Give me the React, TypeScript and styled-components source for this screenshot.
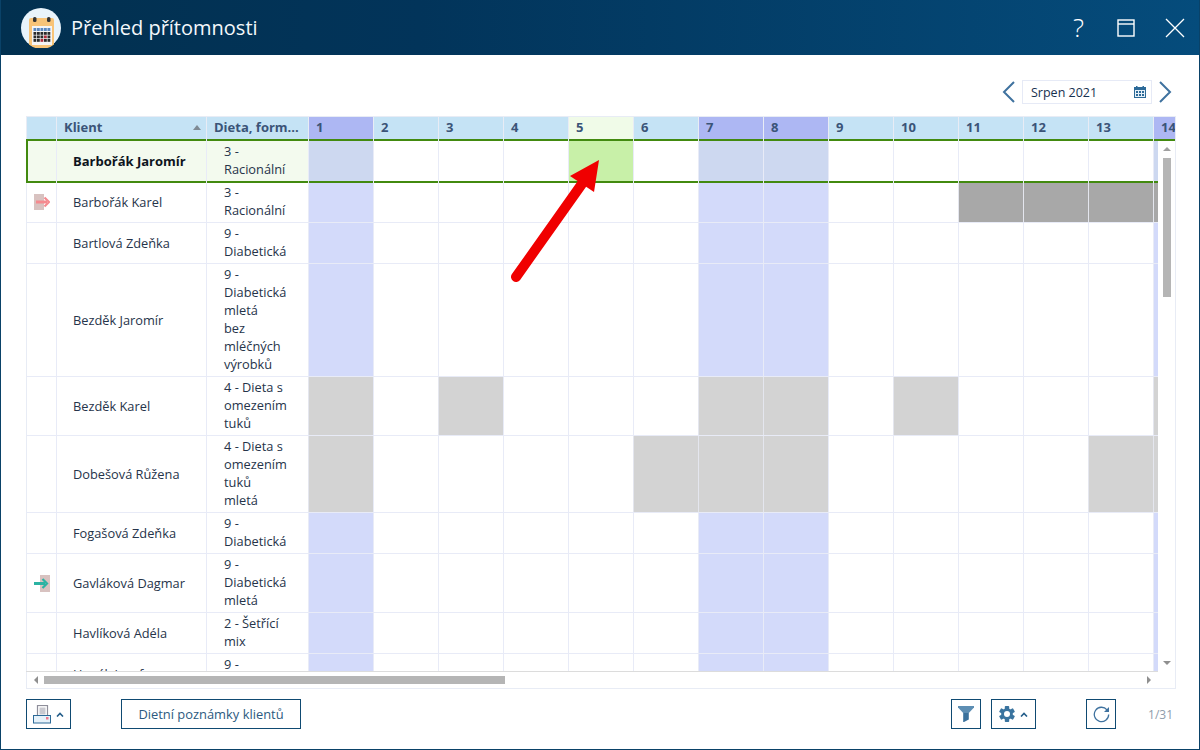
import React from "react";
import styled, { createGlobalStyle, css } from "styled-components";

const Global = createGlobalStyle`
  html, body { margin: 0; padding: 0; background: #fff; }
  body { font-family: "Open Sans", "Noto Sans", sans-serif; }
  * { box-sizing: border-box; }
`;

const GREEN = "#428a0f";
const selLines = css`
  background-image: linear-gradient(${GREEN}, ${GREEN}), linear-gradient(${GREEN}, ${GREEN});
  background-size: 100% 2px, 100% 2px;
  background-position: left top, left bottom;
  background-repeat: no-repeat;
  background-clip: padding-box;
  background-origin: padding-box;
`;

const Win = styled.div`
  position: relative; width: 1200px; height: 750px; background: #fff; overflow: hidden;
  border: 1px solid #0a4268; border-top: 0;
  display: flex; flex-direction: column;
`;
const TitleBar = styled.header`
  height: 55px; margin: 0 -1px; flex: none; display: flex; align-items: center;
  padding: 0 15px 0 21px;
  background: linear-gradient(90deg, #02304f 0%, #02345a 35%, #054c7c 100%);
  color: #fff;
`;
const TitleText = styled.div`
  font-size: 20px; margin-left: 10px; flex: 1; line-height: 55px; color: #f4f8fb;
`;
const TitleIcons = styled.div`display: flex; align-items: center; gap: 30px;`;
const Question = styled.span`font-size: 26px; font-weight: 300; line-height: 1; width: 15px; text-align: center; margin-right: 1px; margin-top: -2px;`;
const Body = styled.main`
  flex: 1; padding: 25px 25px 20px; display: flex; flex-direction: column; min-height: 0;
`;
const DateRow = styled.div`
  height: 24px; display: flex; justify-content: flex-end; align-items: center; gap: 7px; padding-right: 2px; margin-bottom: 12px;
`;
const DateBox = styled.div`
  width: 130px; height: 24px; border: 1px solid #e6eaf6; padding: 0 5px 0 8px;
  display: flex; justify-content: space-between; align-items: center;
  font-size: 12.5px; color: #17314f;
`;
const Grid = styled.section`
  position: relative; height: 573px; width: 1150px; border-right: 1px solid #e8ecf5; border-bottom: 1px solid #e8ecf5;
  display: flex; flex-direction: column; overflow: hidden;
`;
const HeadRow = styled.div`
  display: flex; height: 23px; flex: none; background: #c5e3f5; border-top: 1px solid #e8ecf5;
  position: relative; z-index: 4;
`;
const Head = styled.div<{ $w: number; $bg?: string; $pad?: number }>`
  width: ${p => p.$w}px; flex: none; background: ${p => p.$bg || "transparent"};
  font-size: 13px; font-weight: 700; color: #3b5478; line-height: 21px;
  padding-left: ${p => p.$pad ?? 7}px; border-left: 1px solid #e8ecf5; position: relative;
  white-space: nowrap; overflow: hidden;
`;
const SortMark = styled.i`
  position: absolute; right: 5px; top: 8px; width: 0; height: 0;
  border-left: 4.5px solid transparent; border-right: 4.5px solid transparent; border-bottom: 5px solid #7f8a94;
`;
const Viewport = styled.div`
  position: relative; height: 533px; flex: none; overflow: hidden; border-bottom: 1px solid #dcdcdc; width: 1132px;
`;
const Row = styled.div<{ $h: number; $sel?: boolean }>`
  display: flex; height: ${p => p.$h}px; border-bottom: 1px solid #e8ebf7; position: relative;
  ${p => p.$sel ? "border-bottom: 0; margin-bottom: -1px; z-index: 1;" : ""}
`;
const IconCell = styled.div<{ $sel?: boolean }>`
  width: 30px; flex: none; display: flex; align-items: center; justify-content: center;
  border-left: ${p => p.$sel ? `2px solid ${GREEN}` : "1px solid #e8ecf5"};
  ${p => p.$sel && css`background-color: #f3faee; ${selLines}`}
`;
const NameCell = styled.div<{ $sel?: boolean }>`
  width: 150px; flex: none; border-left: 1px solid #e8ebf7; padding-left: 16px;
  display: flex; align-items: center; font-size: ${p => p.$sel ? 13 : 12.8}px; color: ${p => p.$sel ? "#0d1420" : "#26344a"};
  font-weight: ${p => p.$sel ? 700 : 400}; white-space: nowrap;
  ${p => p.$sel && css`background-color: #f3faee; ${selLines}`}
`;
const DietCell = styled.div<{ $sel?: boolean }>`
  width: 102px; flex: none; border-left: 1px solid #e8ebf7; padding: 0 0 2px 17px;
  display: flex; align-items: center; font-size: 12.8px; line-height: 18px; color: #26344a;
  white-space: pre-line;
  ${p => p.$sel && css`background-color: #f3faee; ${selLines}`}
`;
const Day = styled.div<{ $c: string; $sel?: boolean }>`
  width: 65px; flex: none; border-left: 1px solid #e8ebf7;
  background-color: ${p => ({
    n: "#fff", w: "#d3dafa", g: "#d3d3d3", d: "#a8a8a8", s: "#cdd8f0", h: "#c8f0a8",
  } as Record<string, string>)[p.$c]};
  ${p => p.$c === "g" || p.$c === "d" ? "border-left-color: #e4e6ee;" : ""}
  ${p => p.$sel && selLines}
`;
const VBar = styled.div`
  position: absolute; right: 0; top: 23px; width: 17px; height: 533px; background: #fff; z-index: 3; border-top: 2px solid ${GREEN};
`;
const VThumb = styled.div`
  position: absolute; left: 5px; top: 17px; width: 8px; height: 139px; background: #b5b5b5;
`;
const Arrow = styled.i<{ $d: "up" | "down" | "left" | "right" }>`
  position: absolute; width: 0; height: 0;
  ${p => p.$d === "up" ? "left:5px;top:6px;border-left:4px solid transparent;border-right:4px solid transparent;border-bottom:4px solid #a0a0a0;" : ""}
  ${p => p.$d === "down" ? "left:5px;bottom:7px;border-left:4px solid transparent;border-right:4px solid transparent;border-top:4px solid #8f8f8f;" : ""}
  ${p => p.$d === "left" ? "left:7px;top:4px;border-top:4px solid transparent;border-bottom:4px solid transparent;border-right:4px solid #8f8f8f;" : ""}
  ${p => p.$d === "right" ? "right:24px;top:4px;border-top:4px solid transparent;border-bottom:4px solid transparent;border-left:4px solid #8f8f8f;" : ""}
`;
const HBar = styled.div`position: relative; height: 16px; flex: none; border-left: 1px solid #e8ecf5;`;
const HThumb = styled.div`position: absolute; left: 17px; top: 4px; width: 461px; height: 8px; background: #b5b5b5;`;
const Footer = styled.footer`
  display: flex; align-items: center; margin-top: 10px; height: 30px; width: 1150px;
`;
const Btn = styled.button<{ $w: number; $ml?: number }>`
  width: ${p => p.$w}px; height: 30px; margin-left: ${p => p.$ml ?? 0}px; padding: 0; background: #fff; flex: none;
  border: 1px solid #0f4a72; display: flex; align-items: center; justify-content: center; gap: 5px;
  font-family: inherit; font-size: 12.9px; color: #2c5a80;
`;
const Counter = styled.div`margin-left: auto; font-size: 12px; color: #8e9cab; padding-right: 3px;`;
const Overlay = styled.svg`position: absolute; left: -1px; top: 0; pointer-events: none; z-index: 5;`;

const Logo = () => (
  <svg width="40" height="40" viewBox="0 0 40 40">
    <circle cx="20" cy="20" r="20" fill="#e9f4fb" />
    <path d="M10 10h21a2 2 0 0 1 2 2V36.500a20 20 0 0 1-25 0V12a2 2 0 0 1 2-2z" fill="#f8c478" />
    <rect x="12" y="9" width="3.500" height="5" rx="1.500" fill="#333" />
    <rect x="26" y="9" width="3.500" height="5" rx="1.500" fill="#333" />
    <rect x="11" y="18" width="20" height="19" fill="#f5f5f5" />
    {[0, 1, 2, 3, 4].map(c => <rect key={c} x={12.500 + c * 3.500} y="20" width="2.800" height="3" fill="#5b88c0" />)}
    {[0, 1, 2].map(r => [0, 1, 2, 3, 4].map(c => (
      <rect key={r + "-" + c} x={12.500 + c * 3.500} y={24 + r * 3.500} width="2.800" height="2.800"
        fill={(r === 1 && c === 3) || (r === 2 && c === 2) ? "#b02a3a" : "#2a2a2a"} />
    )))}
  </svg>
);

const OutIcon = () => (
  <svg width="16" height="16" viewBox="0 0 16 16">
    <rect x="0" y="0" width="10" height="16" fill="#d8c2c0" />
    <path d="M2 8h11" stroke="#f58a8f" strokeWidth="3" />
    <path d="M10.500 3.500 15 8l-4.500 4.500" stroke="#f58a8f" strokeWidth="2.200" fill="none" />
  </svg>
);
const InIcon = () => (
  <svg width="16" height="17" viewBox="0 0 16 17">
    <rect x="6" y="0" width="10" height="17" fill="#d8c2c0" />
    <path d="M0 8.500h11" stroke="#2bb3a3" strokeWidth="3" />
    <path d="M8.500 4 13 8.500 8.500 13" stroke="#2bb3a3" strokeWidth="2.200" fill="none" />
  </svg>
);

type R = { name: string; diet: string; h: number; days?: Record<number, string>; icon?: "out" | "in"; sel?: boolean };
const rows: R[] = [
  { name: "Barbořák Jaromír", diet: "3 -\nRacionální", h: 44, sel: true, days: { 5: "h" } },
  { name: "Barbořák Karel", diet: "3 -\nRacionální", h: 41, icon: "out", days: { 11: "d", 12: "d", 13: "d", 14: "d" } },
  { name: "Bartlová Zdeňka", diet: "9 -\nDiabetická", h: 41 },
  { name: "Bezděk Jaromír", diet: "9 -\nDiabetická\nmletá\nbez\nmléčných\nvýrobků", h: 113 },
  { name: "Bezděk Karel", diet: "4 - Dieta s\nomezením\ntuků", h: 59, days: { 1: "g", 3: "g", 7: "g", 8: "g", 10: "g", 14: "g" } },
  { name: "Dobešová Růžena", diet: "4 - Dieta s\nomezením\ntuků\nmletá", h: 77, days: { 1: "g", 6: "g", 7: "g", 8: "g", 13: "g", 14: "g" } },
  { name: "Fogašová Zdeňka", diet: "9 -\nDiabetická", h: 41 },
  { name: "Gavláková Dagmar", diet: "9 -\nDiabetická\nmletá", h: 59, icon: "in" },
  { name: "Havlíková Adéla", diet: "2 - Šetřící\nmix", h: 41 },
  { name: "Hanák Josef", diet: "9 -\nDiabetická", h: 41 },
];
const weekend = [1, 7, 8, 14];
const days = Array.from({ length: 14 }, (_, i) => i + 1);

export default function App() {
  return (
    <>
      <Global />
      <Win>
        <TitleBar>
          <Logo />
          <TitleText>Přehled přítomnosti</TitleText>
          <TitleIcons>
            <Question>?</Question>
            <svg width="18" height="18" viewBox="0 0 18 18" fill="none" stroke="#fff" strokeWidth="1.400">
              <rect x="1" y="1" width="16" height="16" />
              <path d="M1 5h16" />
            </svg>
            <svg width="20" height="20" viewBox="0 0 20 20" fill="none" stroke="#fff" strokeWidth="1.300">
              <path d="M1 1l18 18M19 1 1 19" />
            </svg>
          </TitleIcons>
        </TitleBar>
        <Body>
          <DateRow>
            <svg width="13" height="22" viewBox="0 0 13 22" fill="none" stroke="#3f729f" strokeWidth="2"><path d="M12 1 2 11l10 10" /></svg>
            <DateBox>
              Srpen 2021
              <svg width="12" height="12" viewBox="0 0 12 12">
                <path d="M0 1h12v11H0z" fill="#2c6a98" />
                <rect x="1" y="4" width="10" height="7" fill="#e6f0f8" />
                {[0, 1, 2].map(r => [0, 1].map(c => <rect key={r + "" + c} x={2 + r * 3} y={5 + c * 3} width="2" height="2" fill="#2c6a98" />))}
                <rect x="2" y="0" width="1.500" height="2" fill="#2c6a98" />
                <rect x="8.500" y="0" width="1.500" height="2" fill="#2c6a98" />
              </svg>
            </DateBox>
            <svg width="13" height="22" viewBox="0 0 13 22" fill="none" stroke="#3f729f" strokeWidth="2"><path d="M1 1l10 10L1 21" /></svg>
          </DateRow>
          <Grid>
            <HeadRow>
              <Head $w={30} />
              <Head $w={150} $pad={7}>Klient<SortMark /></Head>
              <Head $w={102} $pad={7}>Dieta, form...</Head>
              {days.map(d => (
                <Head key={d} $w={d === 14 ? 22 : 65} $pad={7} $bg={weekend.includes(d) ? "#adb7f3" : d === 5 ? "#f0fbe8" : undefined}>{d}</Head>
              ))}
            </HeadRow>
            <Viewport>
              {rows.map(r => (
                <Row key={r.name} $h={r.h} $sel={r.sel}>
                  <IconCell $sel={r.sel}>
                    {r.icon === "out" && <OutIcon />}
                    {r.icon === "in" && <InIcon />}
                  </IconCell>
                  <NameCell $sel={r.sel}>{r.name}</NameCell>
                  <DietCell $sel={r.sel}>{r.diet}</DietCell>
                  {days.map(d => {
                    const c = r.days?.[d] ?? (weekend.includes(d) ? (r.sel ? "s" : "w") : "n");
                    return <Day key={d} $c={c} $sel={r.sel} />;
                  })}
                </Row>
              ))}
            </Viewport>
            <VBar>
              <Arrow $d="up" />
              <VThumb />
              <Arrow $d="down" />
            </VBar>
            <HBar>
              <Arrow $d="left" />
              <HThumb />
              <Arrow $d="right" />
            </HBar>
          </Grid>
          <Footer>
            <Btn $w={45}>
              <svg width="18" height="19" viewBox="0 0 18 19">
                <rect x="4.500" y="0.500" width="10" height="11" fill="#fff" stroke="#8e8e9a" strokeWidth="1.200" />
                <rect x="6.500" y="2.500" width="6" height="7" fill="#c9c9d0" />
                <rect x="0.500" y="10.500" width="17" height="7.500" fill="#e6f2fa" stroke="#2c6a98" />
                <rect x="13" y="12" width="2.500" height="2.500" fill="#f0788c" />
              </svg>
              <svg width="8" height="5" viewBox="0 0 8 5" fill="none" stroke="#235d8a" strokeWidth="1.600"><path d="M1 4.500 4 1.500l3 3" /></svg>
            </Btn>
            <Btn $w={180} $ml={50}>Dietní poznámky klientů</Btn>
            <Btn $w={30} $ml={650}>
              <svg width="16" height="16" viewBox="0 0 16 16">
                <path d="M0 0h16v1.500L10.800 7H5.200L0 1.500z" fill="#5d8eb3" />
                <path d="M5.200 7h5.600v6.500L6 16H5.200z" fill="#3a719c" />
              </svg>
            </Btn>
            <Btn $w={45} $ml={10}>
              <svg width="16" height="16" viewBox="0 0 16 16">
                <g fill="#3a749f">
                  {[0, 60, 120].map(a => <rect key={a} x="5.800" y="0" width="4.400" height="16" rx="0.800" transform={`rotate(${a} 8 8)`} />)}
                  <circle cx="8" cy="8" r="5.800" />
                </g>
                <circle cx="8" cy="8" r="3" fill="#fff" />
              </svg>
              <svg width="8" height="5" viewBox="0 0 8 5" fill="none" stroke="#235d8a" strokeWidth="1.600"><path d="M1 4.500 4 1.500l3 3" /></svg>
            </Btn>
            <Btn $w={30} $ml={50}>
              <svg width="17" height="17" viewBox="0 0 17 17" fill="none">
                <path d="M14 3.800A7.200 7.200 0 1 0 15.700 8.500" stroke="#3f729f" strokeWidth="1.300" />
                <path d="M16 1v5h-5z" fill="#3f729f" />
              </svg>
            </Btn>
            <Counter>1/31</Counter>
          </Footer>
        </Body>
        <Overlay width="1200" height="750" viewBox="0 0 1200 750">
          <path d="M516 277 584 181" stroke="#f00000" strokeWidth="10" strokeLinecap="round" fill="none" />
          <path d="M599 160 570 176 594 192z" fill="#f00000" />
        </Overlay>
      </Win>
    </>
  );
}
